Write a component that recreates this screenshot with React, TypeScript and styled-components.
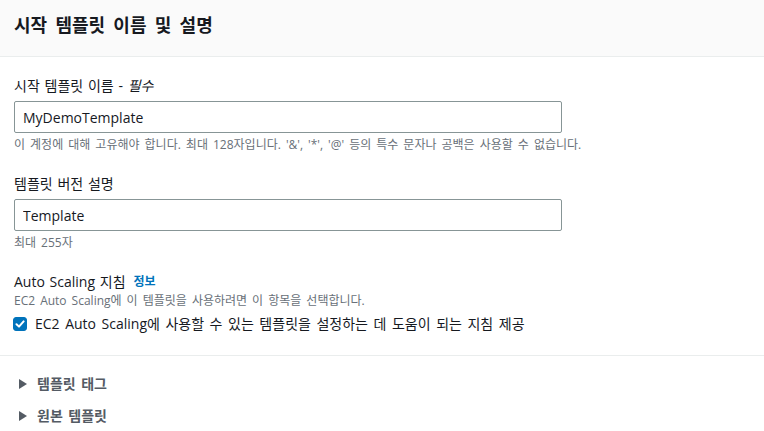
import React, { useState } from "react";
import styled, { createGlobalStyle } from "styled-components";

const GlobalStyle = createGlobalStyle`
  html, body {
    margin: 0;
    padding: 0;
    background: #ffffff;
  }
  body {
    font-family: "Open Sans", "Noto Sans CJK KR", sans-serif;
    color: #16191f;
    word-spacing: 0.12em;
  }
`;

const Panel = styled.div`
  width: 764px;
  background: #ffffff;
`;

const Header = styled.div`
  height: 57px;
  display: flex;
  align-items: center;
  padding: 0 14px 7px;
  box-sizing: border-box;
  background: #fafafa;
  border-bottom: 1px solid #eaeded;
`;

const Title = styled.h2`
  margin: 0;
  font-size: 18px;
  font-weight: 700;
  line-height: 22px;
  color: #16191f;
  word-spacing: 0.2em;
`;

const Body = styled.div`
  padding: 18px 14px 20px;
  display: flex;
  flex-direction: column;
  gap: 20px;
  border-bottom: 1px solid #eaeded;
`;

const Field = styled.div`
  display: flex;
  flex-direction: column;
`;

const Label = styled.label`
  font-size: 14px;
  line-height: 22px;
  color: #16191f;
  display: flex;
  align-items: center;
  gap: 8px;
  margin-bottom: 4px;
  word-spacing: 0.08em;
`;

const Optional = styled.i`
  font-style: italic;
`;

const InfoLink = styled.a`
  font-size: 12px;
  font-weight: 700;
  color: #0073bb;
  text-decoration: none;
`;

const Input = styled.input`
  width: 548px;
  height: 32px;
  box-sizing: border-box;
  border: 1px solid #879596;
  border-radius: 2px;
  padding: 0 8px;
  font-family: inherit;
  font-size: 14px;
  color: #16191f;
  outline: none;
`;

const Hint = styled.div<{ $top?: boolean }>`
  font-size: 12px;
  line-height: 16px;
  color: #687078;
  margin-top: ${({ $top }) => ($top ? "-4px" : "4px")};
`;

const CheckRow = styled.label`
  display: flex;
  align-items: center;
  gap: 8px;
  margin-top: 4px;
  font-size: 14px;
  line-height: 22px;
  color: #16191f;
  cursor: pointer;
`;

const Box = styled.span<{ $checked: boolean }>`
  width: 14px;
  height: 14px;
  margin-left: -1px;
  border-radius: 3px;
  box-sizing: border-box;
  display: flex;
  align-items: center;
  justify-content: center;
  background: ${({ $checked }) => ($checked ? "#0073bb" : "#ffffff")};
  border: 1px solid ${({ $checked }) => ($checked ? "#0073bb" : "#879596")};
`;

const Expanders = styled.div`
  padding: 17px 14px 0;
  display: flex;
  flex-direction: column;
  gap: 10px;
`;

const Expander = styled.div`
  display: flex;
  align-items: center;
  gap: 10px;
  padding-left: 5px;
  font-size: 14px;
  font-weight: 700;
  line-height: 22px;
  color: #545b64;
  cursor: pointer;
`;

const Caret = styled.span`
  width: 0;
  height: 0;
  border-top: 5px solid transparent;
  border-bottom: 5px solid transparent;
  border-left: 8px solid #545b64;
`;

export default function App() {
  const [name, setName] = useState("MyDemoTemplate");
  const [desc, setDesc] = useState("Template");
  const [checked, setChecked] = useState(true);

  return (
    <>
      <GlobalStyle />
      <Panel>
        <Header>
          <Title>시작 템플릿 이름 및 설명</Title>
        </Header>
        <Body>
          <Field>
            <Label>
              <span>
                시작 템플릿 이름 - <Optional>필수</Optional>
              </span>
            </Label>
            <Input value={name} onChange={(e) => setName(e.target.value)} />
            <Hint>
              이 계정에 대해 고유해야 합니다. 최대 128자입니다. '&amp;', '*', '@' 등의 특수 문자나
              공백은 사용할 수 없습니다.
            </Hint>
          </Field>
          <Field>
            <Label>템플릿 버전 설명</Label>
            <Input value={desc} onChange={(e) => setDesc(e.target.value)} />
            <Hint>최대 255자</Hint>
          </Field>
          <Field>
            <Label>
              Auto Scaling 지침 <InfoLink href="#">정보</InfoLink>
            </Label>
            <Hint $top>EC2 Auto Scaling에 이 템플릿을 사용하려면 이 항목을 선택합니다.</Hint>
            <CheckRow onClick={() => setChecked(!checked)}>
              <Box $checked={checked}>
                {checked && (
                  <svg width="10" height="10" viewBox="0 0 10 10">
                    <path
                      d="M1.5 5.2 L4 7.6 L8.6 2.4"
                      fill="none"
                      stroke="#ffffff"
                      strokeWidth="2"
                      strokeLinecap="round"
                      strokeLinejoin="round"
                    />
                  </svg>
                )}
              </Box>
              EC2 Auto Scaling에 사용할 수 있는 템플릿을 설정하는 데 도움이 되는 지침 제공
            </CheckRow>
          </Field>
        </Body>
        <Expanders>
          <Expander>
            <Caret />
            템플릿 태그
          </Expander>
          <Expander>
            <Caret />
            원본 템플릿
          </Expander>
        </Expanders>
      </Panel>
    </>
  );
}
